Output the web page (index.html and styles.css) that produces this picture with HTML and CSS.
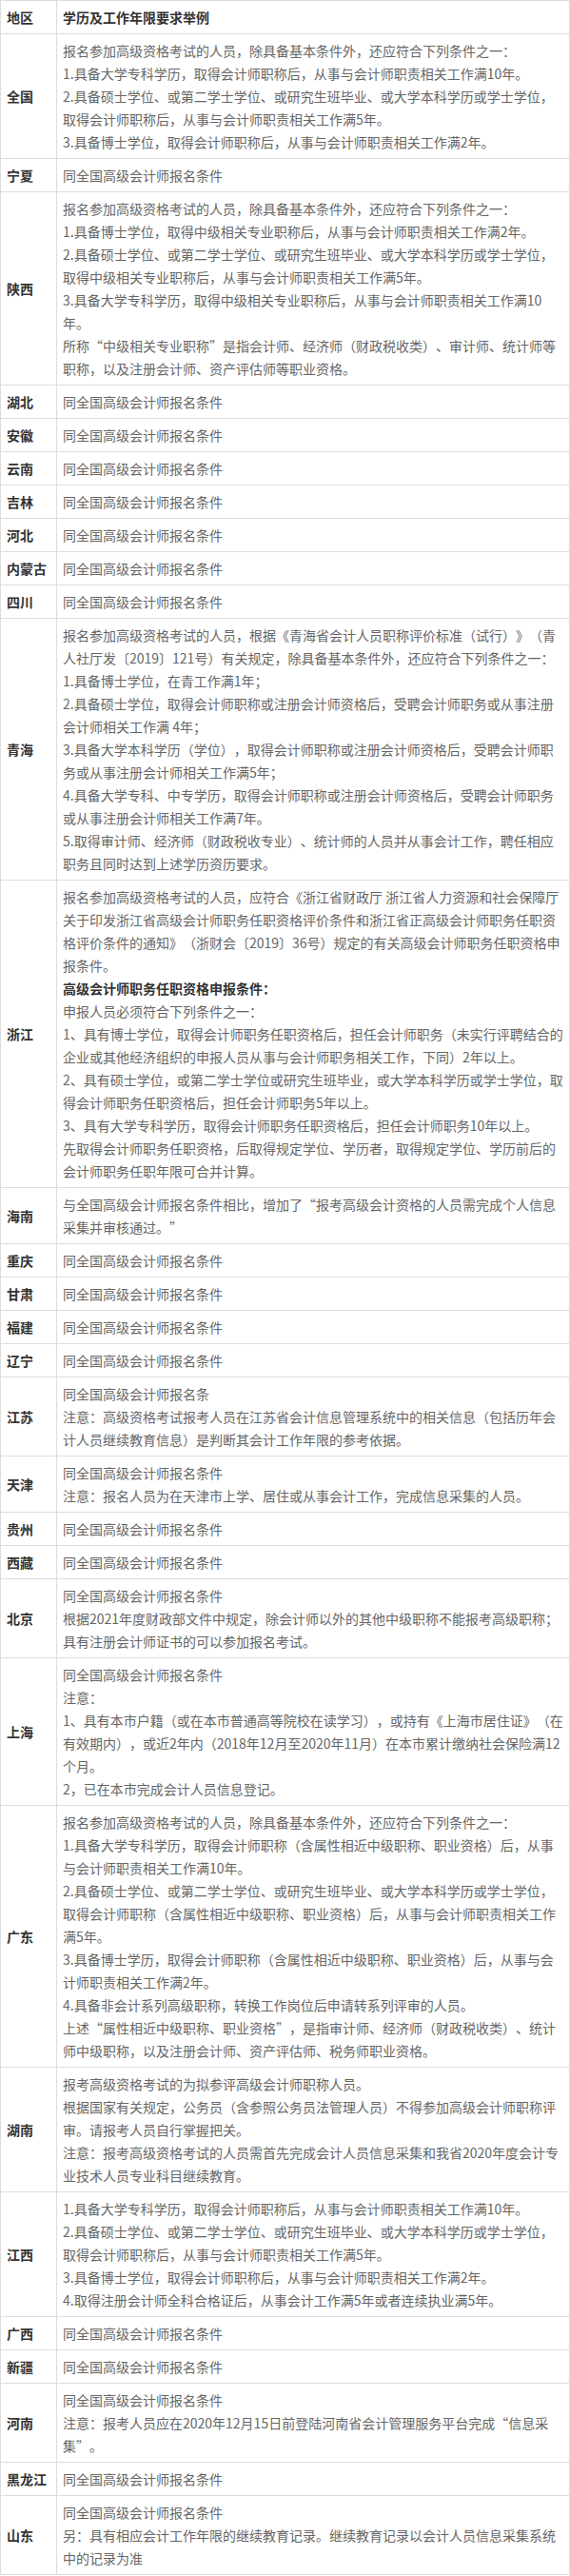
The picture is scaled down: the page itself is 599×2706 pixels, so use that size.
FILE: index.html
```html
<!DOCTYPE html>
<html lang="zh-CN">
<head>
<meta charset="utf-8">
<title>高级会计师报名条件</title>
<link rel="stylesheet" href="styles.css">
</head>
<body>
<table class="req">
  <colgroup><col class="col-region"><col class="col-desc"></colgroup>
  <thead>
    <tr><th>地区</th><th>学历及工作年限要求举例</th></tr>
  </thead>
  <tbody>
    <tr><td class="region">全国</td><td class="desc">报名参加高级资格考试的人员，除具备基本条件外，还应符合下列条件之一：<br>1.具备大学专科学历，取得会计师职称后，从事与会计师职责相关工作满10年。<br>2.具备硕士学位、或第二学士学位、或研究生班毕业、或大学本科学历或学士学位，<br>取得会计师职称后，从事与会计师职责相关工作满5年。<br>3.具备博士学位，取得会计师职称后，从事与会计师职责相关工作满2年。</td></tr>
    <tr><td class="region">宁夏</td><td class="desc">同全国高级会计师报名条件</td></tr>
    <tr><td class="region">陕西</td><td class="desc">报名参加高级资格考试的人员，除具备基本条件外，还应符合下列条件之一：<br>1.具备博士学位，取得中级相关专业职称后，从事与会计师职责相关工作满2年。<br>2.具备硕士学位、或第二学士学位、或研究生班毕业、或大学本科学历或学士学位，<br>取得中级相关专业职称后，从事与会计师职责相关工作满5年。<br>3.具备大学专科学历，取得中级相关专业职称后，从事与会计师职责相关工作满10年。<br>所称“中级相关专业职称”是指会计师、经济师（财政税收类）、审计师、统计师等职称，以及注册会计师、资产评估师等职业资格。</td></tr>
    <tr><td class="region">湖北</td><td class="desc">同全国高级会计师报名条件</td></tr>
    <tr><td class="region">安徽</td><td class="desc">同全国高级会计师报名条件</td></tr>
    <tr><td class="region">云南</td><td class="desc">同全国高级会计师报名条件</td></tr>
    <tr><td class="region">吉林</td><td class="desc">同全国高级会计师报名条件</td></tr>
    <tr><td class="region">河北</td><td class="desc">同全国高级会计师报名条件</td></tr>
    <tr><td class="region">内蒙古</td><td class="desc">同全国高级会计师报名条件</td></tr>
    <tr><td class="region">四川</td><td class="desc">同全国高级会计师报名条件</td></tr>
    <tr><td class="region">青海</td><td class="desc">报名参加高级资格考试的人员，根据《青海省会计人员职称评价标准（试行）》（青人社厅发〔2019〕121号）有关规定，除具备基本条件外，还应符合下列条件之一：<br>1.具备博士学位，在青工作满1年；<br>2.具备硕士学位，取得会计师职称或注册会计师资格后，受聘会计师职务或从事注册会计师相关工作满 4年；<br>3.具备大学本科学历（学位），取得会计师职称或注册会计师资格后，受聘会计师职务或从事注册会计师相关工作满5年；<br>4.具备大学专科、中专学历，取得会计师职称或注册会计师资格后，受聘会计师职务或从事注册会计师相关工作满7年。<br>5.取得审计师、经济师（财政税收专业）、统计师的人员并从事会计工作，聘任相应职务且同时达到上述学历资历要求。</td></tr>
    <tr><td class="region">浙江</td><td class="desc">报名参加高级资格考试的人员，应符合《浙江省财政厅 浙江省人力资源和社会保障厅关于印发浙江省高级会计师职务任职资格评价条件和浙江省正高级会计师职务任职资格评价条件的通知》（浙财会〔2019〕36号）规定的有关高级会计师职务任职资格申报条件。<br><strong class="em">高级会计师职务任职资格申报条件：</strong><br>申报人员必须符合下列条件之一：<br>1、具有博士学位，取得会计师职务任职资格后，担任会计师职务（未实行评聘结合的企业或其他经济组织的申报人员从事与会计师职务相关工作，下同）2年以上。<br>2、具有硕士学位，或第二学士学位或研究生班毕业，或大学本科学历或学士学位，取得会计师职务任职资格后，担任会计师职务5年以上。<br>3、具有大学专科学历，取得会计师职务任职资格后，担任会计师职务10年以上。<br>先取得会计师职务任职资格，后取得规定学位、学历者，取得规定学位、学历前后的会计师职务任职年限可合并计算。</td></tr>
    <tr><td class="region">海南</td><td class="desc">与全国高级会计师报名条件相比，增加了“报考高级会计资格的人员需完成个人信息采集并审核通过。”</td></tr>
    <tr><td class="region">重庆</td><td class="desc">同全国高级会计师报名条件</td></tr>
    <tr><td class="region">甘肃</td><td class="desc">同全国高级会计师报名条件</td></tr>
    <tr><td class="region">福建</td><td class="desc">同全国高级会计师报名条件</td></tr>
    <tr><td class="region">辽宁</td><td class="desc">同全国高级会计师报名条件</td></tr>
    <tr><td class="region">江苏</td><td class="desc">同全国高级会计师报名条<br>注意：高级资格考试报考人员在江苏省会计信息管理系统中的相关信息（包括历年会计人员继续教育信息）是判断其会计工作年限的参考依据。</td></tr>
    <tr><td class="region">天津</td><td class="desc">同全国高级会计师报名条件<br>注意：报名人员为在天津市上学、居住或从事会计工作，完成信息采集的人员。</td></tr>
    <tr><td class="region">贵州</td><td class="desc">同全国高级会计师报名条件</td></tr>
    <tr><td class="region">西藏</td><td class="desc">同全国高级会计师报名条件</td></tr>
    <tr><td class="region">北京</td><td class="desc">同全国高级会计师报名条件<br>根据2021年度财政部文件中规定，除会计师以外的其他中级职称不能报考高级职称；<br>具有注册会计师证书的可以参加报名考试。</td></tr>
    <tr><td class="region">上海</td><td class="desc">同全国高级会计师报名条件<br>注意：<br>1、具有本市户籍（或在本市普通高等院校在读学习），或持有《上海市居住证》（在有效期内），或近2年内（2018年12月至2020年11月）在本市累计缴纳社会保险满12个月。<br>2，已在本市完成会计人员信息登记。</td></tr>
    <tr><td class="region">广东</td><td class="desc">报名参加高级资格考试的人员，除具备基本条件外，还应符合下列条件之一：<br>1.具备大学专科学历，取得会计师职称（含属性相近中级职称、职业资格）后，从事与会计师职责相关工作满10年。<br>2.具备硕士学位、或第二学士学位、或研究生班毕业、或大学本科学历或学士学位，<br>取得会计师职称（含属性相近中级职称、职业资格）后，从事与会计师职责相关工作满5年。<br>3.具备博士学历，取得会计师职称（含属性相近中级职称、职业资格）后，从事与会计师职责相关工作满2年。<br>4.具备非会计系列高级职称，转换工作岗位后申请转系列评审的人员。<br>上述“属性相近中级职称、职业资格”，是指审计师、经济师（财政税收类）、统计师中级职称，以及注册会计师、资产评估师、税务师职业资格。</td></tr>
    <tr><td class="region">湖南</td><td class="desc">报考高级资格考试的为拟参评高级会计师职称人员。<br>根据国家有关规定，公务员（含参照公务员法管理人员）不得参加高级会计师职称评审。请报考人员自行掌握把关。<br>注意：报考高级资格考试的人员需首先完成会计人员信息采集和我省2020年度会计专业技术人员专业科目继续教育。</td></tr>
    <tr><td class="region">江西</td><td class="desc">1.具备大学专科学历，取得会计师职称后，从事与会计师职责相关工作满10年。<br>2.具备硕士学位、或第二学士学位、或研究生班毕业、或大学本科学历或学士学位，<br>取得会计师职称后，从事与会计师职责相关工作满5年。<br>3.具备博士学位，取得会计师职称后，从事与会计师职责相关工作满2年。<br>4.取得注册会计师全科合格证后，从事会计工作满5年或者连续执业满5年。</td></tr>
    <tr><td class="region">广西</td><td class="desc">同全国高级会计师报名条件</td></tr>
    <tr><td class="region">新疆</td><td class="desc">同全国高级会计师报名条件</td></tr>
    <tr><td class="region">河南</td><td class="desc">同全国高级会计师报名条件<br>注意：报考人员应在2020年12月15日前登陆河南省会计管理服务平台完成“信息采集”。</td></tr>
    <tr><td class="region">黑龙江</td><td class="desc">同全国高级会计师报名条件</td></tr>
    <tr><td class="region">山东</td><td class="desc">同全国高级会计师报名条件<br>另：具有相应会计工作年限的继续教育记录。继续教育记录以会计人员信息采集系统中的记录为准</td></tr>
  </tbody>
</table>
</body>
</html>
```
FILE: styles.css
```css
html, body {
  margin: 0;
  padding: 0;
  background: #fff;
}

body {
  font-family: "Noto Sans CJK SC", "Microsoft YaHei", sans-serif;
}

.req {
  width: 599px;
  table-layout: fixed;
  border-collapse: collapse;
  font-size: 14px;
  line-height: 24px;
  color: #666;
  text-spacing-trim: space-all;
}

.col-region {
  width: 59px;
}

.req th,
.req td {
  border: 1px solid #ddd;
  padding: 5px 5px 5px 6px;
  text-align: left;
  vertical-align: middle;
}

.req th,
.region {
  font-weight: bold;
  color: #333;
}

.desc {
  word-break: normal;
}

.em {
  font-weight: bold;
  color: #333;
}
```
